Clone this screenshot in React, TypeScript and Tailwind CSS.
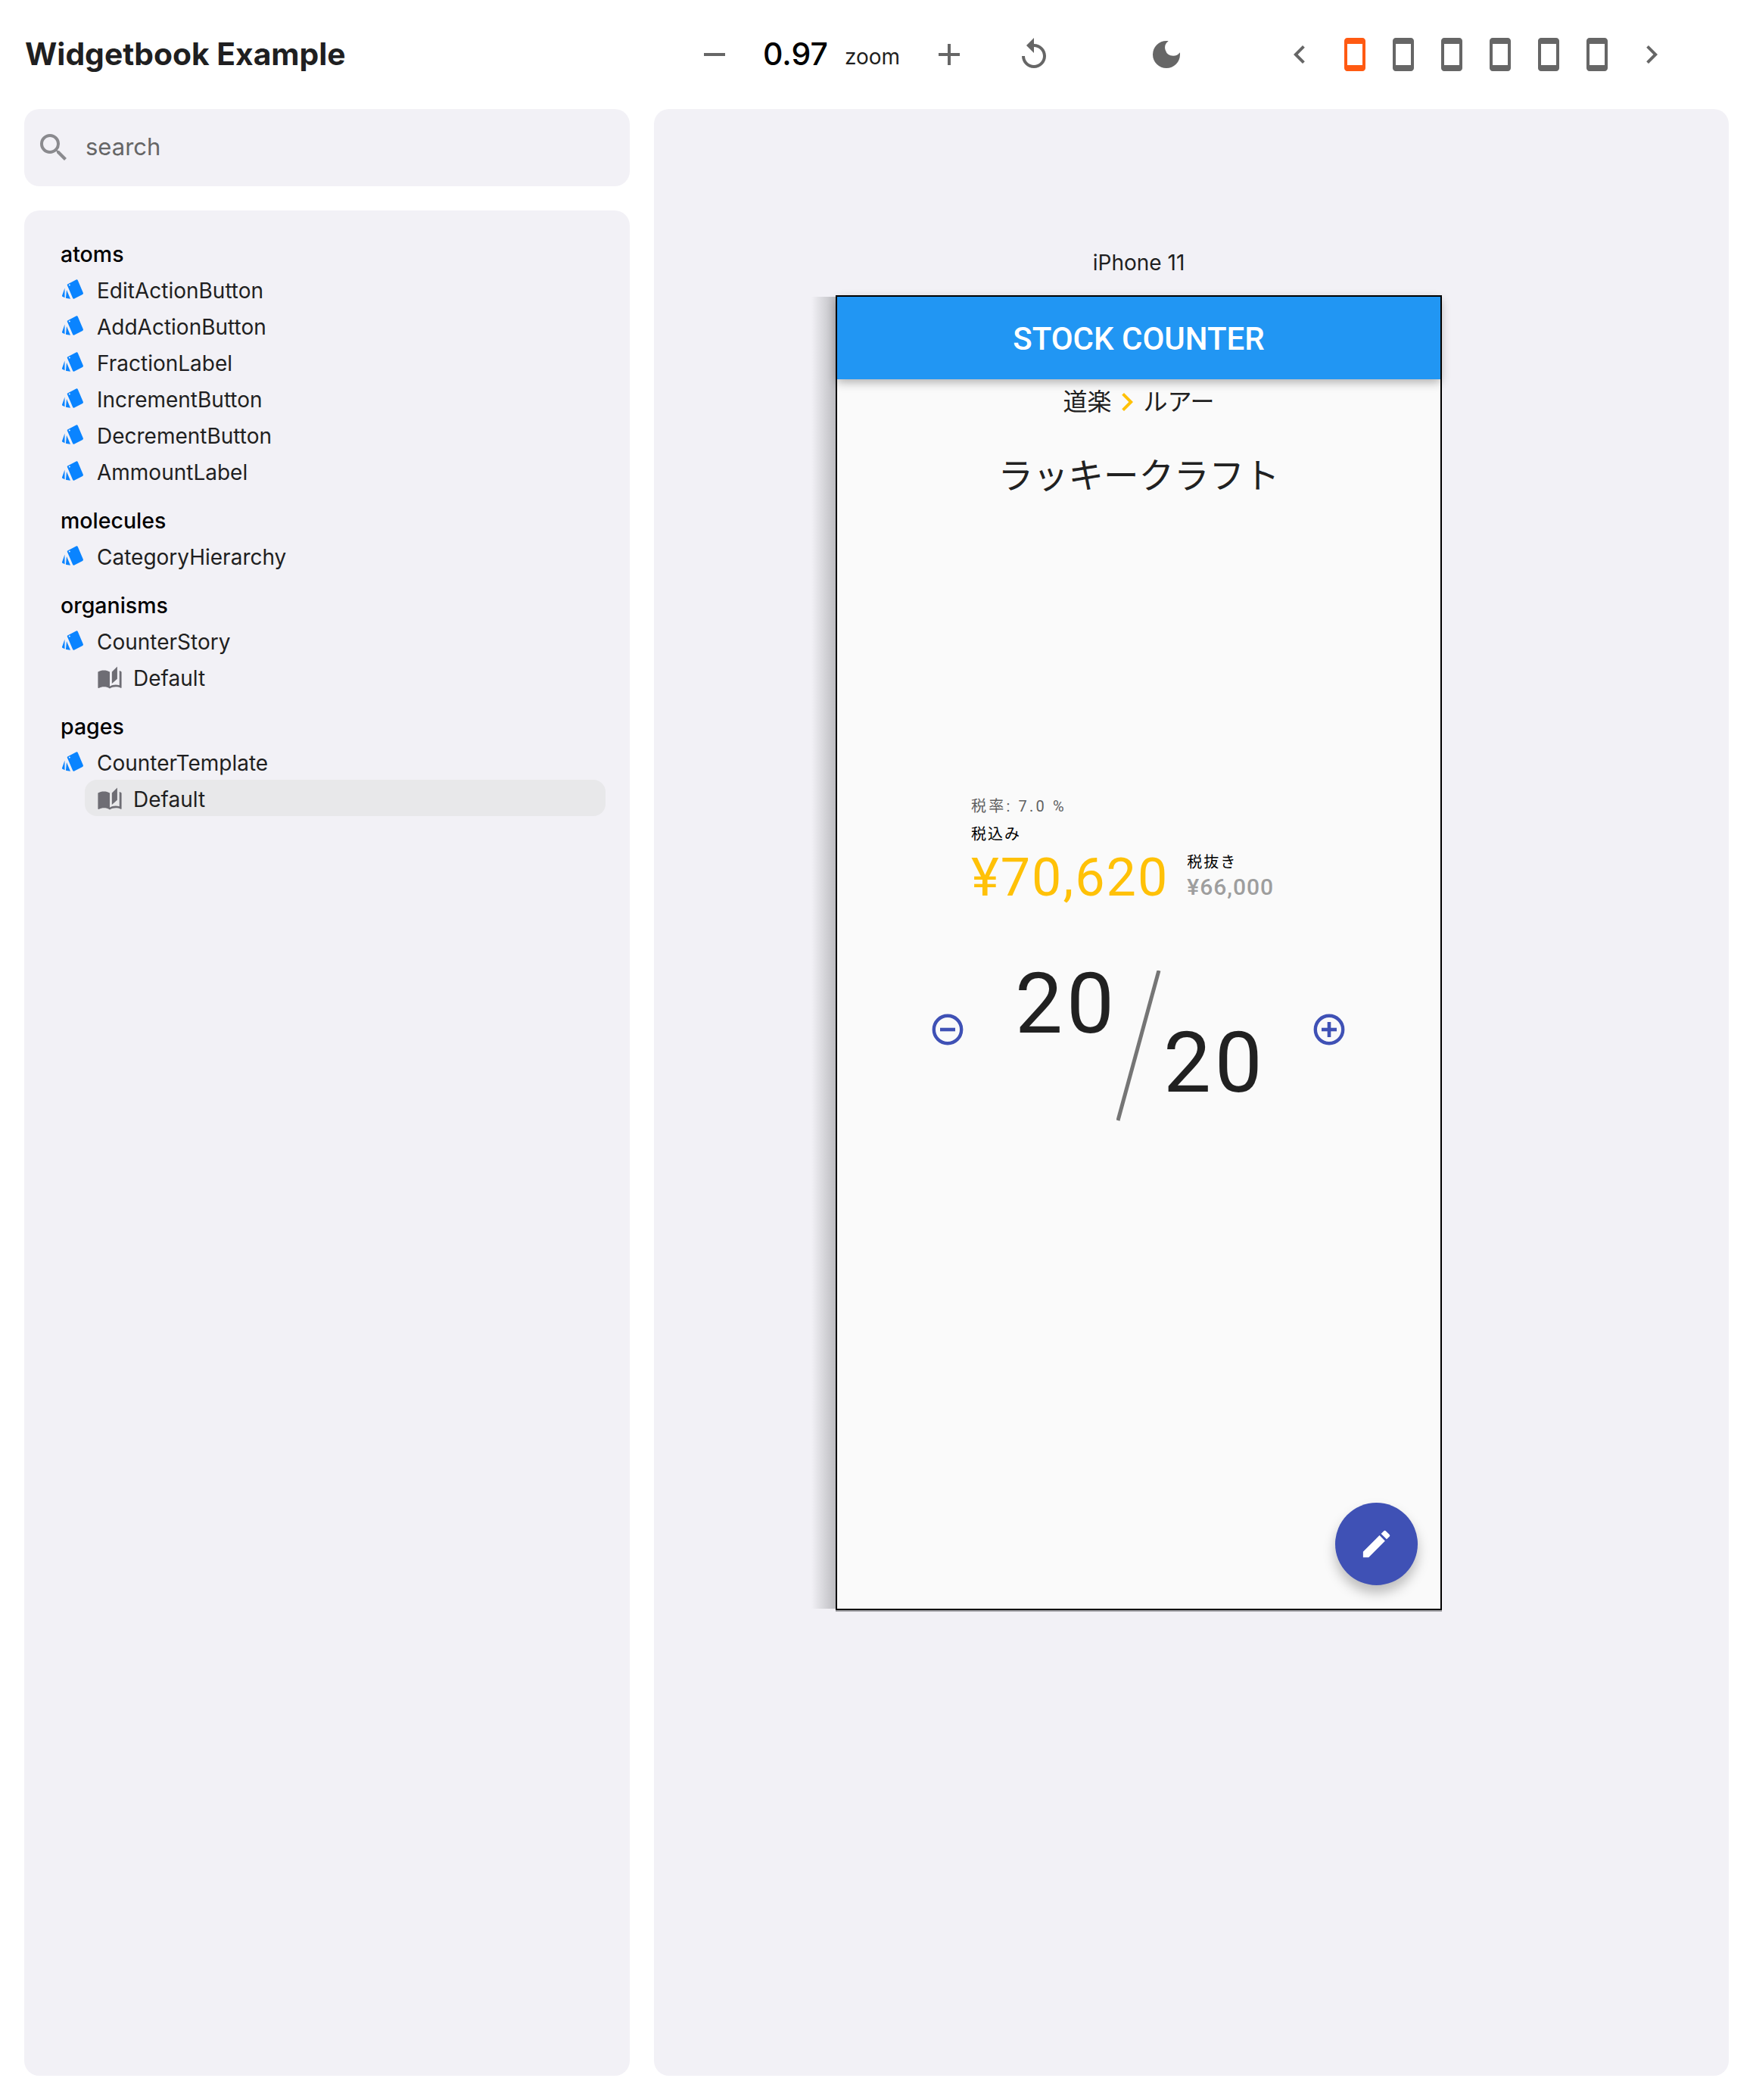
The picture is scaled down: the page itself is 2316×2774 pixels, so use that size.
import {
  MdAdd,
  MdAutoStories,
  MdChevronLeft,
  MdChevronRight,
  MdDarkMode,
  MdEdit,
  MdRemove,
  MdReplay,
  MdSearch,
  MdSmartphone,
} from "react-icons/md";

type Group = {
  name: string;
  items: { label: string; stories?: { label: string; selected?: boolean }[] }[];
};

const groups: Group[] = [
  {
    name: "atoms",
    items: [
      { label: "EditActionButton" },
      { label: "AddActionButton" },
      { label: "FractionLabel" },
      { label: "IncrementButton" },
      { label: "DecrementButton" },
      { label: "AmmountLabel" },
    ],
  },
  { name: "molecules", items: [{ label: "CategoryHierarchy" }] },
  {
    name: "organisms",
    items: [{ label: "CounterStory", stories: [{ label: "Default" }] }],
  },
  {
    name: "pages",
    items: [
      {
        label: "CounterTemplate",
        stories: [{ label: "Default", selected: true }],
      },
    ],
  },
];

function WidgetIcon() {
  return (
    <svg width="28" height="26" viewBox="0 0 28 26" className="mb-[4px] shrink-0">
      <path
        d="M7.6 6.2 18.6.5c1-.5 1.8-.2 2.2.7l7 16.6c.4 1 .1 1.7-.8 2.1L16.200 25.500c-1 .4-1.700.1-2.100-.8L6.900 8c-.3-.8-.1-1.400.7-1.800Z"
        fill="#0a84ff"
      />
      <circle cx="9.800" cy="7.400" r="1" fill="#f2f1f6" />
      <path
        d="M3.500 11.500 0 21.500c-.2.600 0 1 .500 1.200L3.500 24.200Z"
        fill="#0a84ff"
      />
      <path d="M6 14 5 24c0 .700.300 1 1 1l5 .800Z" fill="#0a84ff" />
    </svg>
  );
}

// remove_circle_outline / add_circle_outline, a little heavier than the Material ones
function CircleIcon({ plus, className }: { plus?: boolean; className?: string }) {
  return (
    <svg width="48" height="48" viewBox="0 0 24 24" className={className}>
      <circle cx="12" cy="12" r="9.100" fill="none" stroke="currentColor" strokeWidth="2.200" />
      <path d="M7 12h10" stroke="currentColor" strokeWidth="2.300" />
      {plus && <path d="M12 7v10" stroke="currentColor" strokeWidth="2.300" />}
    </svg>
  );
}

function Sidebar() {
  return (
    <div className="flex h-[2464px] flex-col gap-4 rounded-[20px] bg-[#f2f1f6] pt-[34px] pl-[48px]">
      {groups.map((group) => (
        <div key={group.name}>
          <div className="flex h-12 items-center text-[28.500px] font-medium text-black">
            {group.name}
          </div>
          {group.items.map((item) => (
            <div key={item.label}>
              <div className="flex h-12 items-center gap-[18px] text-[28px] text-[#1f1f21]">
                <span className="ml-[2px] flex">
                  <WidgetIcon />
                </span>
                {item.label}
              </div>
              {item.stories?.map((story) => (
                <div
                  key={story.label}
                  className={`ml-[32px] flex h-12 w-[688px] items-center gap-[14px] rounded-[16px] pl-[16px] text-[28px] text-[#1f1f21] ${
                    story.selected ? "-mt-[2px] bg-[#e8e8ea] pt-[4px]" : ""
                  }`}
                >
                  <MdAutoStories size={34} className="text-[#6e6d74]" />
                  {story.label}
                </div>
              ))}
            </div>
          ))}
        </div>
      ))}
    </div>
  );
}

function Toolbar() {
  return (
    <div className="flex h-[144px] items-center text-[#666666]">
      <div className="w-[920px] pl-[33px] text-[40.800px] font-bold text-[#1f1f21]">
        Widgetbook Example
      </div>
      <MdRemove size={48} />
      <span className="ml-[40px] text-[41px] font-medium text-black">0.97</span>
      <span className="ml-[22px] mt-[5px] text-[28px] text-[#1f1f21]">zoom</span>
      <span className="ml-[41px] flex">
        <MdAdd size={48} />
      </span>
      <span className="ml-[64px] flex">
        <MdReplay size={48} />
      </span>
      <span className="ml-[127px] flex">
        <MdDarkMode size={48} />
      </span>
      <span className="ml-[128px] flex">
        <MdChevronLeft size={48} />
      </span>
      <div className="ml-[25px] flex gap-4">
        <MdSmartphone size={48} className="text-[#ff5a12]" />
        <MdSmartphone size={48} />
        <MdSmartphone size={48} />
        <MdSmartphone size={48} />
        <MdSmartphone size={48} />
        <MdSmartphone size={48} />
      </div>
      <span className="ml-[24px] flex">
        <MdChevronRight size={48} />
      </span>
    </div>
  );
}

function Phone() {
  return (
    <div className="relative h-[1737px] w-[801px] border-2 border-black bg-[#fafafa] shadow-[0_2px_0_#a8a8ac] font-['Roboto','Noto_Sans_CJK_JP',sans-serif]">
      <div className="absolute top-0 -left-[34px] h-full w-[32px] bg-gradient-to-r from-transparent to-[#bcbcc0]" />

      <div className="relative z-10 flex h-[109px] items-center justify-center bg-[#2196f3] pt-[2px] text-[42px] font-medium text-white shadow-[0_4px_12px_rgba(0,0,0,0.3)]">
        STOCK COUNTER
      </div>

      <div className="flex h-[60px] items-center justify-center text-[32px] text-[#212121]">
        道楽
        <MdChevronRight size={48} className="mx-[-3px] text-[#ffc107]" />
        ルアー
      </div>

      <div className="mt-[33px] flex h-[72px] items-center justify-center text-[46.500px] text-[#212121]">
        ラッキークラフト
      </div>

      <div className="mt-[387px] pl-[177px]">
        <div className="flex h-6 items-center text-[20px] tracking-[3.200px] text-[#616161]">
          税率: 7.0 %
        </div>
        <div className="mt-[13px] flex h-6 items-center text-[20px] tracking-[2px] text-black">
          税込み
        </div>
        <div className="mt-[3px] flex h-20 items-center">
          <span className="mt-[5px] text-[70px] tracking-[2px] text-[#ffc107]">¥70,620</span>
          <div className="ml-[24px] flex flex-col">
            <span className="h-6 text-[20px] leading-6 tracking-[2px] text-black">
              税抜き
            </span>
            <span className="mt-[5px] h-8 text-[30px] leading-8 font-medium tracking-[1px] text-[#9e9e9e]">
              ¥66,000
            </span>
          </div>
        </div>
      </div>

      <div className="mt-[73px] flex items-start pl-[122px] text-[#3f51b5]">
        <CircleIcon className="mt-[66px]" />
        <span className="ml-[65px] text-[112px] leading-[112px] tracking-[5px] text-[#212121]">20</span>
        <svg width="59" height="200" viewBox="0 0 59 200" className="mt-[12px] ml-[-2px]">
          <line x1="56" y1="0" x2="2" y2="198" stroke="#757575" strokeWidth="5" />
        </svg>
        <span className="mt-[78px] ml-[3px] text-[112px] leading-[112px] tracking-[5px] text-[#212121]">20</span>
        <CircleIcon plus className="mt-[66px] ml-[59px]" />
      </div>

      <div className="absolute right-[30px] bottom-[31px] flex h-[109px] w-[109px] items-center justify-center rounded-full bg-[#3f51b5] text-white shadow-[0_10px_16px_rgba(0,0,0,0.25)]">
        <MdEdit size={47} />
      </div>
    </div>
  );
}

export default function App() {
  return (
    <div className="h-[2774px] w-[2316px] bg-white font-['Inter',sans-serif]">
      <Toolbar />
      <div className="flex gap-8 px-8">
        <div className="flex w-[800px] flex-col gap-8">
          <div className="flex h-[102px] items-center rounded-[20px] bg-[#f2f1f6] pl-[15px] text-[31px] text-[#666666]">
            <MdSearch size={48} className="text-[#8a8a8e]" />
            <span className="mb-[2px] ml-[18px]">search</span>
          </div>
          <Sidebar />
        </div>
        <div className="h-[2598px] w-[1420px] rounded-[20px] bg-[#f2f1f6] pt-[183px] pl-[240px]">
          <div className="mb-[23px] w-[801px] text-center text-[28px] leading-[40px] text-[#1f1f21]">
            iPhone 11
          </div>
          <Phone />
        </div>
      </div>
    </div>
  );
}
